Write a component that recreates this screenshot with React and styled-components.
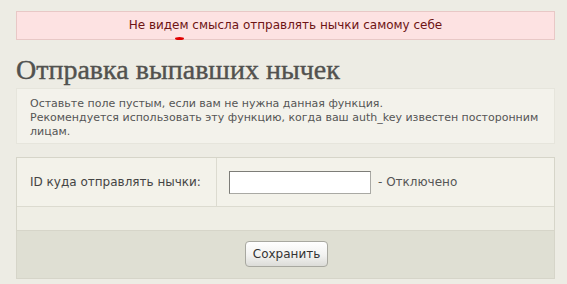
import React from "react";
import styled, { createGlobalStyle } from "styled-components";

const Global = createGlobalStyle`
  html, body { margin: 0; padding: 0; }
  body {
    background: #edece4;
    font-family: "DejaVu Sans", Verdana, sans-serif;
    color: #444;
  }
`;

const Page = styled.div`
  width: 539px;
  padding: 11px 0 0 16px;
`;

const Alert = styled.div`
  position: relative;
  box-sizing: border-box;
  height: 29px;
  border: 1px solid #e8c8c6;
  background: #fde2e2;
  color: #6e1414;
  font-size: 12px;
  line-height: 27px;
  text-align: center;
`;

const Blot = styled.span`
  position: absolute;
  left: 158px;
  top: 25px;
  width: 9px;
  height: 3px;
  border-radius: 50%;
  background: #e00000;
`;

const Title = styled.h1`
  margin: 12px 0 0 0;
  font-family: "Liberation Serif", "Times New Roman", serif;
  font-weight: normal;
  font-size: 28px;
  line-height: 36px;
  color: #52524f;
  -webkit-text-stroke: 0.4px #52524f;
`;

const Info = styled.div`
  box-sizing: border-box;
  border: 1px solid #e6e5dc;
  background: #f3f2eb;
  padding: 8px 13px 4px 13px;
  font-size: 11px;
  line-height: 14px;
  color: #555;
`;

const Form = styled.div`
  margin-top: 13px;
  border: 1px solid #d6d5c9;
  display: grid;
  grid-template-columns: 200px 1fr;
`;

const Cell = styled.div`
  box-sizing: border-box;
  height: 49px;
  display: flex;
  align-items: center;
  background: #f3f2ea;
  border-bottom: 1px solid #dcdbd0;
  font-size: 12px;
  color: #444;
  padding-left: ${(p) => p.$pad}px;
  ${(p) => (p.$divider ? "border-right: 1px solid #dcdbd0;" : "")}
`;

const Spacer = styled.div`
  grid-column: 1 / -1;
  height: 23px;
  background: #efeee5;
  border-bottom: 1px solid #d6d5c9;
`;

const Footer = styled.div`
  grid-column: 1 / -1;
  height: 47px;
  background: #dfdfd3;
  display: flex;
  justify-content: center;
  align-items: center;
`;

const Input = styled.input`
  box-sizing: border-box;
  width: 142px;
  height: 23px;
  border: 1px solid #a9a9a4;
  border-top-color: #7d7d78;
  border-left-color: #7d7d78;
  background: #fff;
  margin: 0 7px 0 0;
  padding: 0 3px;
`;

const Note = styled.span`
  color: #555;
`;

const Button = styled.button`
  box-sizing: border-box;
  width: 83px;
  height: 26px;
  border: 1px solid #a8a8a0;
  border-radius: 4px;
  background: linear-gradient(#ffffff, #f2f2f0 55%, #dcdcd8);
  font-family: "DejaVu Sans", Verdana, sans-serif;
  font-size: 12px;
  color: #333;
  padding: 0;
  margin-left: 2px;
  margin-top: -2px;
`;

export default function App() {
  return (
    <>
      <Global />
      <Page>
        <Alert>
          Не видем смысла отправлять нычки самому себе
          <Blot />
        </Alert>
        <Title>Отправка выпавших нычек</Title>
        <Info>
          Оставьте поле пустым, если вам не нужна данная функция.
          <br />
          Рекомендуется использовать эту функцию, когда ваш auth_key известен посторонним лицам.
        </Info>
        <Form>
          <Cell $pad={13} $divider>ID куда отправлять нычки:</Cell>
          <Cell $pad={12}>
            <Input type="text" />
            <Note>- Отключено</Note>
          </Cell>
          <Spacer />
          <Footer>
            <Button>Сохранить</Button>
          </Footer>
        </Form>
      </Page>
    </>
  );
}
